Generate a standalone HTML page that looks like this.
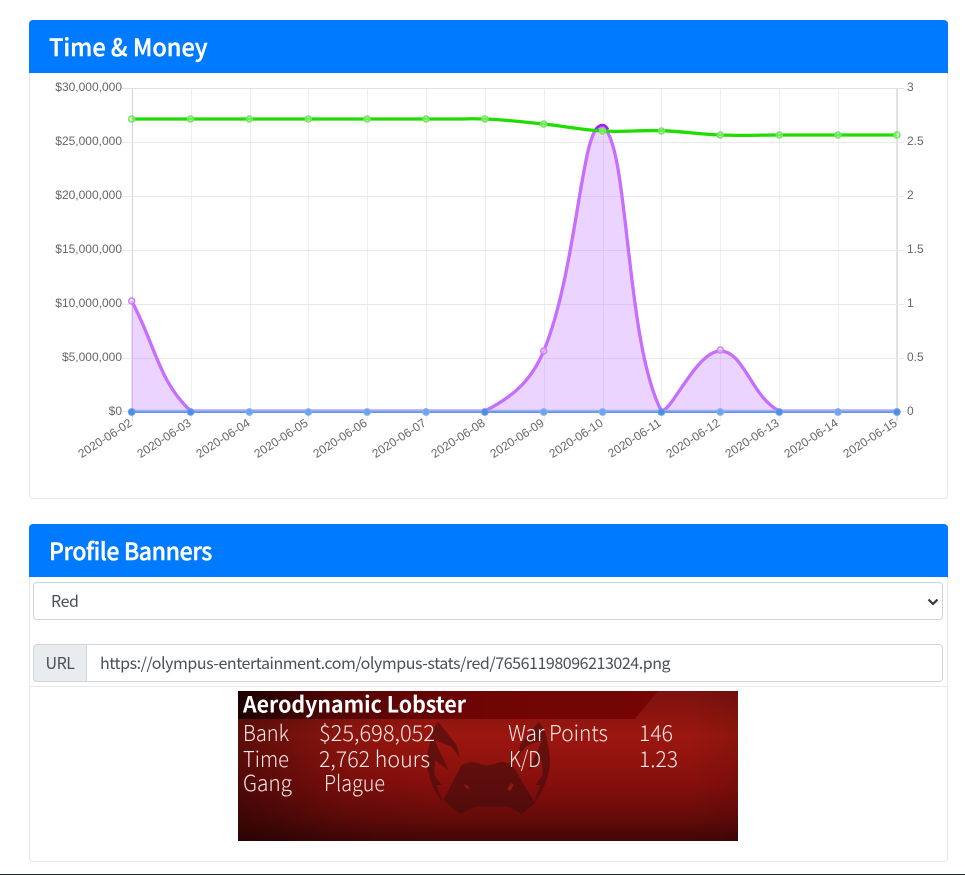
<!DOCTYPE html>
<html lang="en">
<head>
<meta charset="utf-8">
<title>Time &amp; Money</title>
<style>
html,body{margin:0;padding:0;background:#fff;width:965px;height:875px;overflow:hidden}
body{position:relative;font-family:"Noto Sans CJK JP","Liberation Sans",sans-serif;color:#495057}
.card{position:absolute;left:29px;width:917px;background:#fff;border:1px solid rgba(0,0,0,.09);border-radius:4px;box-sizing:content-box}
.hd{position:absolute;left:-1px;top:-1px;width:899px;height:53px;padding-left:20px;background:#007bff;border-radius:4px 4px 0 0;color:#fff;font-size:24px;font-weight:500;line-height:52px;white-space:nowrap;-webkit-text-stroke:.4px #fff}
.hd span{display:inline-block;transform-origin:left center}
.box{position:absolute;box-sizing:border-box;border:1px solid #ced4da;border-radius:4px;background:#fff;height:38px;line-height:34px;font-size:16px;color:#495057;white-space:nowrap}
svg{position:absolute;display:block}
.gv{stroke:#efefef;stroke-width:1}
.gh{stroke:#e9e9e9;stroke-width:1}
.t{font-family:"Liberation Sans",Arial,sans-serif;font-size:12px;fill:#666}
.b{font-family:"Noto Sans CJK JP","Liberation Sans",sans-serif;font-size:22px;font-weight:300;fill:#f6e8e6}
</style>
</head>
<body>
<div class="card" style="top:20px;height:477px"><div class="hd"><span style="transform:scaleX(.98)">Time &amp; Money</span></div></div>

<svg style="left:0;top:0" width="965" height="500" viewBox="0 0 965 500">
<g class="gv">
<line x1="191.5" y1="88" x2="191.5" y2="421"/><line x1="250.5" y1="88" x2="250.5" y2="421"/><line x1="308.5" y1="88" x2="308.5" y2="421"/><line x1="367.5" y1="88" x2="367.5" y2="421"/><line x1="426.5" y1="88" x2="426.5" y2="421"/><line x1="485.5" y1="88" x2="485.5" y2="421"/><line x1="544.5" y1="88" x2="544.5" y2="421"/><line x1="603.5" y1="88" x2="603.5" y2="421"/><line x1="661.5" y1="88" x2="661.5" y2="421"/><line x1="720.5" y1="88" x2="720.5" y2="421"/><line x1="779.5" y1="88" x2="779.5" y2="421"/><line x1="838.5" y1="88" x2="838.5" y2="421"/>
</g>
<line x1="132.5" y1="88" x2="132.5" y2="421" stroke="#d4d4d4"/>
<line x1="897" y1="88" x2="897" y2="421" stroke="#e2e2e2" stroke-width="2"/>
<g class="gh">
<line x1="122" y1="88.5" x2="904" y2="88.5" stroke="#e0e0e0"/><line x1="122" y1="142.5" x2="904" y2="142.5"/><line x1="122" y1="196.5" x2="904" y2="196.5"/><line x1="122" y1="250.5" x2="904" y2="250.5"/><line x1="122" y1="304.5" x2="904" y2="304.5"/><line x1="122" y1="358.5" x2="904" y2="358.5"/><line x1="122" y1="411.5" x2="904" y2="411.5"/>
</g>

<g class="t" text-anchor="end">
<text x="122" y="91">$30,000,000</text><text x="122" y="145">$25,000,000</text><text x="122" y="199">$20,000,000</text><text x="122" y="253">$15,000,000</text><text x="122" y="307">$10,000,000</text><text x="122" y="361">$5,000,000</text><text x="122" y="415">$0</text>
</g>
<g class="t">
<text x="907" y="91">3</text><text x="907" y="145">2.5</text><text x="907" y="199">2</text><text x="907" y="253">1.5</text><text x="907" y="307">1</text><text x="907" y="361">0.5</text><text x="907" y="415">0</text>
</g>
<g class="t" text-anchor="end">
<text transform="translate(133,425) rotate(-33)">2020-06-02</text>
<text transform="translate(192,425) rotate(-33)">2020-06-03</text>
<text transform="translate(251,425) rotate(-33)">2020-06-04</text>
<text transform="translate(309,425) rotate(-33)">2020-06-05</text>
<text transform="translate(368,425) rotate(-33)">2020-06-06</text>
<text transform="translate(427,425) rotate(-33)">2020-06-07</text>
<text transform="translate(486,425) rotate(-33)">2020-06-08</text>
<text transform="translate(545,425) rotate(-33)">2020-06-09</text>
<text transform="translate(604,425) rotate(-33)">2020-06-10</text>
<text transform="translate(662,425) rotate(-33)">2020-06-11</text>
<text transform="translate(721,425) rotate(-33)">2020-06-12</text>
<text transform="translate(780,425) rotate(-33)">2020-06-13</text>
<text transform="translate(839,425) rotate(-33)">2020-06-14</text>
<text transform="translate(898,425) rotate(-33)">2020-06-15</text>
</g>

<path d="M131.7 301C155.2 345 158.6 381.1 190.6 411C205.7 411 226 411 249.4 411L484.9 411C512.5 396.9 531.2 381.1 543.7 351C578.3 267.5 581.6 116.3 602.6 127C628.8 140.3 625 341.6 661.4 411C672.1 411 696.8 351 720.3 351C743.8 351 751.5 396.9 779.2 411L896.9 411L131.7 411Z" fill="rgba(180,95,255,.27)" stroke="none"/>
<line x1="132" y1="301" x2="132" y2="411" stroke="#d9b8f8"/>
<path d="M131.7 301C155.2 345 158.6 381.1 190.6 411C205.7 411 226 411 249.4 411L484.9 411C512.5 396.9 531.2 381.1 543.7 351C578.3 267.5 581.6 116.3 602.6 127C628.8 140.3 625 341.6 661.4 411C672.1 411 696.8 351 720.3 351C743.8 351 751.5 396.9 779.2 411L896.9 411" fill="none" stroke="#c56eff" stroke-width="3.3"/>
<path d="M595.5 129.5C597.5 126.5 600 125 602.5 125C605 125 606.5 126.5 608 129.5" fill="none" stroke="#a31cf5" stroke-width="2.6"/>

<g fill="rgba(240,220,255,.55)" stroke="#cc80ff" stroke-width="1.5">
<circle cx="131.7" cy="301" r="3"/><circle cx="543.7" cy="351" r="3"/><circle cx="720.3" cy="350" r="3"/>
</g>

<path d="M131.7 119L461.4 119C470 118.6 476 118.7 484.9 119C508.4 120 520.2 121.6 543.7 124C567.2 126.4 579 129.7 602.6 131C626.2 132.3 638 129.9 661.5 130.7C685 131.5 696.8 134.1 720.3 135C743.8 135.9 755.7 135 779.2 135L896.9 135" fill="none" stroke="#20dc00" stroke-width="3.3"/>
<g fill="rgba(215,250,205,.45)" stroke="#6fe65c" stroke-width="1.5">
<circle cx="131.7" cy="119" r="3"/><circle cx="190.6" cy="119" r="3"/><circle cx="249.4" cy="119" r="3"/><circle cx="308.3" cy="119" r="3"/><circle cx="367.1" cy="119" r="3"/><circle cx="426" cy="119" r="3"/><circle cx="484.9" cy="119" r="3"/><circle cx="543.7" cy="124" r="3"/><circle cx="602.6" cy="131" r="3"/><circle cx="661.5" cy="131" r="3"/><circle cx="720.3" cy="135" r="3"/><circle cx="779.2" cy="135" r="3"/><circle cx="838" cy="135" r="3"/><circle cx="896.9" cy="135" r="3"/>
</g>

<line x1="131.7" y1="412" x2="896.9" y2="412" stroke="#6c94ec" stroke-width="2"/>
<line x1="131.7" y1="410.5" x2="896.9" y2="410.5" stroke="#98b6e8" stroke-width="1.5"/>
<g fill="#4b8ee6" stroke="#6e9fe8" stroke-width="1">
<circle cx="131.7" cy="412" r="3.4"/><circle cx="190.6" cy="412" r="3.4"/><circle cx="484.9" cy="412" r="3.4"/><circle cx="661.4" cy="412" r="3.4"/><circle cx="779.2" cy="412" r="3.4"/><circle cx="896.9" cy="412" r="3.4"/>
</g>
<g fill="#6ea4ec" stroke="#88b0ec" stroke-width="1">
<circle cx="249.4" cy="412" r="3.4"/><circle cx="308.3" cy="412" r="3.4"/><circle cx="367.1" cy="412" r="3.4"/><circle cx="426" cy="412" r="3.4"/><circle cx="543.7" cy="412" r="3.4"/><circle cx="602.6" cy="412" r="3.4"/><circle cx="720.3" cy="412" r="3.4"/><circle cx="838" cy="412" r="3.4"/>
</g>
</svg>

<div class="card" style="top:524px;height:336px"><div class="hd"><span style="letter-spacing:-.4px;transform:scaleX(.96)">Profile Banners</span></div></div>

<div class="box" style="left:33px;top:582px;width:910px;padding-left:17px;letter-spacing:-.4px">Red</div>
<svg style="left:926px;top:596px" width="16" height="12" viewBox="0 0 16 12"><path d="M2.5 3.5L7 8L11.5 3.5" fill="none" stroke="#343a40" stroke-width="2.2"/></svg>

<div class="box" style="left:33px;top:644px;width:54px;background:#e9ecef;border-radius:4px 0 0 4px;text-align:center;letter-spacing:-.5px">URL</div>
<div class="box" style="left:87px;top:644px;width:856px;border-left:none;border-radius:0 4px 4px 0;padding-left:13px;letter-spacing:-.44px">https://olympus-entertainment.com/olympus-stats/red/76561198096213024.png</div>

<div style="position:absolute;left:30px;top:686px;width:917px;height:1px;background:#e9e9e9"></div>

<svg style="left:238px;top:691px" width="500" height="150" viewBox="238 691 500 150">
<defs>
<linearGradient id="v" x1="0" y1="0" x2="0" y2="1">
<stop offset="0" stop-color="#7c120e"/><stop offset=".3" stop-color="#9c1710"/><stop offset=".62" stop-color="#860f0c"/><stop offset=".85" stop-color="#640b09"/><stop offset="1" stop-color="#420606"/>
</linearGradient>
<linearGradient id="h" x1="0" y1="0" x2="1" y2="0">
<stop offset="0" stop-color="#000" stop-opacity=".4"/><stop offset=".22" stop-color="#000" stop-opacity=".1"/><stop offset=".4" stop-color="#000" stop-opacity="0"/><stop offset=".9" stop-color="#000" stop-opacity="0"/><stop offset="1" stop-color="#000" stop-opacity=".1"/>
</linearGradient>
<linearGradient id="s" x1="0" y1="0" x2="1" y2="0">
<stop offset="0" stop-color="#1c0000"/><stop offset=".25" stop-color="#560505"/><stop offset=".6" stop-color="#700505"/><stop offset="1" stop-color="#760505"/>
</linearGradient>
</defs>
<rect x="238" y="691" width="500" height="150" fill="url(#v)"/>
<rect x="238" y="691" width="500" height="150" fill="url(#h)"/>
<polygon points="238,691 658,691 635,719 238,719" fill="url(#s)"/>
<g fill="#3a0d0c" fill-opacity=".55">
<path d="M443.3 800L461.7 765L471.7 761.7L486.7 765.7L501.7 761.7L511.7 764.3L535 803.3L521.7 814L508 806.7L475 806.7L460 814Z"/>
<path d="M438.3 721.7C433 728 430 735 430 741.7C427 752 426 762 428.3 771.7C431 785 437 795 443.3 803.3L436.7 785L441.7 785L434.3 775L435 760L448.3 770L438.3 748.3L435 740L451.7 746.7L460 758.3L456.7 745Z"/>
<path transform="translate(977,0) scale(-1,1)" d="M438.3 721.7C433 728 430 735 430 741.7C427 752 426 762 428.3 771.7C431 785 437 795 443.3 803.3L436.7 785L441.7 785L434.3 775L435 760L448.3 770L438.3 748.3L435 740L451.7 746.7L460 758.3L456.7 745Z"/>
</g>
<g fill="#8c1a16">
<polygon points="464,784 468,786 470,790 466,788"/><polygon points="507,789 511,783 514,785 510,791"/>
</g>
<text x="243" y="712.5" textLength="223" lengthAdjust="spacingAndGlyphs" style="font-family:'Noto Sans CJK JP','Liberation Sans',sans-serif;font-size:22px;font-weight:700;fill:#fff">Aerodynamic Lobster</text>
<text class="b" x="243" y="741" textLength="46" lengthAdjust="spacingAndGlyphs">Bank</text>
<text class="b" x="319" y="741" textLength="116" lengthAdjust="spacingAndGlyphs">$25,698,052</text>
<text class="b" x="243" y="767" textLength="46" lengthAdjust="spacingAndGlyphs">Time</text>
<text class="b" x="319" y="767" textLength="111" lengthAdjust="spacingAndGlyphs">2,762 hours</text>
<text class="b" x="243" y="791" textLength="49" lengthAdjust="spacingAndGlyphs">Gang</text>
<text class="b" x="324" y="791" textLength="61" lengthAdjust="spacingAndGlyphs">Plague</text>
<text class="b" x="508" y="741" textLength="100" lengthAdjust="spacingAndGlyphs">War Points</text>
<text class="b" x="639" y="741" textLength="34" lengthAdjust="spacingAndGlyphs">146</text>
<text class="b" x="509" y="767" textLength="32" lengthAdjust="spacingAndGlyphs">K/D</text>
<text class="b" x="639" y="767" textLength="39" lengthAdjust="spacingAndGlyphs">1.23</text>
</svg>

<div style="position:absolute;left:0;top:874px;width:965px;height:1px;background:#1d2a33"></div>
</body>
</html>
